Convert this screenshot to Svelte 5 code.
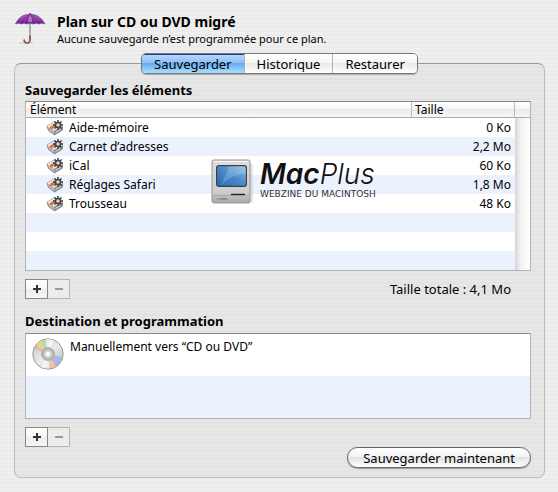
<script>
  const tabs = ["Sauvegarder", "Historique", "Restaurer"];
  const items = [
    { name: "Aide-mémoire", size: "0 Ko" },
    { name: "Carnet d’adresses", size: "2,2 Mo" },
    { name: "iCal", size: "60 Ko" },
    { name: "Réglages Safari", size: "1,8 Mo" },
    { name: "Trousseau", size: "48 Ko" },
  ];
  // empty striped rows under the last item
  const blanks = [1, 2, 3];
  const teeth = [0, 45, 90, 135, 180, 225, 270, 315];

  let active = $state("Sauvegarder");
</script>

{#snippet addRemove(what)}
  <div class="add-remove">
    <button type="button" aria-label="Ajouter {what}">
      <svg width="10" height="10" viewBox="0 0 10 10"><path d="M1 5h8M5 1v8" stroke="#333" stroke-width="2" /></svg>
    </button>
    <button type="button" aria-label="Supprimer {what}" disabled>
      <svg width="10" height="10" viewBox="0 0 10 10"><path d="M1 5h8" stroke="#999" stroke-width="2" /></svg>
    </button>
  </div>
{/snippet}

<main>
  <header>
    <svg class="umbrella" width="32" height="34" viewBox="0 0 32 34">
      <defs>
        <linearGradient id="canopy" x1="0" y1="0" x2="0" y2="1">
          <stop offset="0" stop-color="#b668c8" />
          <stop offset="1" stop-color="#6b1f88" />
        </linearGradient>
      </defs>
      <ellipse cx="12" cy="31" rx="8" ry="1.5" fill="#d8d8d8" />
      <path d="M16 11v17.500" stroke="#9a9a9a" stroke-width="1.500" />
      <path d="M16 24v4.500q-.3 2.500-3 2.500q-2.800-.2-2.800-2.800" fill="none" stroke="#86584e" stroke-width="1.700" stroke-linecap="round" />
      <path d="M16 1v2" stroke="#555" stroke-width="1.500" />
      <path d="M1.500 12C4.500 5.500 9 2.300 16 2.300S27.500 5.500 31 12q-3-1.500-6 0q-2.500-1.500-5.200 0q-3.500-1.500-7.200 0q-2.500-1.500-5.300 0q-3-1.500-5.800 0z" fill="url(#canopy)" stroke="#6a2488" stroke-width=".5" />
      <path d="M7.500 11.600Q10 5 15.500 2.600Q12.700 6 12.600 11.600M25 11.600Q22.500 5 16.500 2.600Q19.600 6 19.800 11.600" fill="none" stroke="#5c1b76" stroke-width=".7" />
      <path d="M14.200 10Q14.400 5.500 16 3Q17.900 5.500 18.200 10z" fill="#c987d5" opacity=".7" />
    </svg>
    <div>
      <h1>Plan sur CD ou DVD migré</h1>
      <p>Aucune sauvegarde n’est programmée pour ce plan.</p>
    </div>
  </header>

  <nav class="tabs">
    {#each tabs as tab}
      <button type="button" class:active={active === tab} onclick={() => (active = tab)}>{tab}</button>
    {/each}
  </nav>

  <section class="panel">
    <h2>Sauvegarder les éléments</h2>
    <div class="list">
      <table>
        <thead>
          <tr>
            <th>Élément</th>
            <th class="size">Taille</th>
            <th class="track"></th>
          </tr>
        </thead>
        <tbody>
          {#each items as item}
            <tr>
              <td>
                <div class="item">
                  <svg width="18" height="16" viewBox="0 0 18 16">
                    <path d="M1 6L9 1.500L16.500 6.500V10L8.500 15L2.500 10.500z" fill="#b8b8bc" stroke="#77777c" stroke-width=".8" />
                    <path d="M1 6L9 1.500L16.500 6.500L8 11z" fill="#e6e6e9" />
                    <path d="M8 11L16.500 6.500V10L8.500 15z" fill="#8c8c92" />
                    <path d="M3.500 8.500Q4 5.500 8 5L7.700 3.800L10 6L8 8Q6 7.500 6.700 10z" fill="#f0701c" />
                    <path d="M9.500 12.500l5-3" stroke="#e4e4e8" stroke-width="1" />
                    <g fill="#454545" transform="translate(12 5)">
                      {#each teeth as angle}
                        <rect x="-.8" y="-5" width="1.600" height="3" transform="rotate({angle})" />
                      {/each}
                    </g>
                    <circle cx="12" cy="5" r="2.500" fill="#d9d9d9" stroke="#454545" stroke-width="1.500" />
                  </svg>
                  {item.name}
                </div>
              </td>
              <td class="size">{item.size}</td>
              <td class="track"></td>
            </tr>
          {/each}
          {#each blanks as blank}
            <tr>
              <td></td>
              <td></td>
              <td class="track"></td>
            </tr>
          {/each}
        </tbody>
      </table>

      <div class="watermark">
        <svg width="44" height="47" viewBox="0 0 44 47">
          <defs>
            <linearGradient id="shell" x1="0" y1="0" x2="0" y2="1">
              <stop offset="0" stop-color="#dedee0" />
              <stop offset=".75" stop-color="#cdcdd0" />
              <stop offset="1" stop-color="#a8a8ac" />
            </linearGradient>
            <linearGradient id="screen" x1="0" y1="1" x2="1" y2="0">
              <stop offset="0" stop-color="#2a6ab0" />
              <stop offset=".5" stop-color="#4689c9" />
              <stop offset="1" stop-color="#8bbce5" />
            </linearGradient>
          </defs>
          <path d="M38 4l4 2v37l-5 2z" fill="#b5b5b8" opacity=".35" />
          <rect x="1" y="1" width="38" height="43" rx="2" fill="url(#shell)" stroke="#96969a" />
          <path d="M2 2.500h36" stroke="#f8f8f8" />
          <rect x="5" y="6" width="31" height="22" rx="3" fill="#3c4048" />
          <rect x="6.200" y="7.200" width="28.600" height="19.600" rx="2" fill="url(#screen)" />
          <path d="M18 7.200h14.800q2 0 2 2V15Q20 15 10 26.800Q14 17 18 7.200z" fill="#fff" opacity=".18" />
          <path d="M20 35.500h14" stroke="#252525" stroke-width="1.500" />
          <path d="M2 36.500h36" stroke="#97979a" stroke-width=".6" />
          <circle cx="6.500" cy="40" r="1" fill="#9aa82c" />
          <path d="M8.500 40h8" stroke="#77777c" stroke-width="1.200" />
        </svg>
        <div>
          <div class="brand"><b>Mac</b>Plus</div>
          <div class="tagline">WEBZINE DU MACINTOSH</div>
        </div>
      </div>
    </div>

    <div class="list-footer">
      {@render addRemove("un élément")}
      <span class="total">Taille totale : 4,1 Mo</span>
    </div>

    <h2>Destination et programmation</h2>
    <ul class="list destinations">
      <li>
        <svg width="32" height="32" viewBox="0 0 32 32">
          <defs>
            <linearGradient id="disc" x1="0" y1="0" x2="1" y2="1">
              <stop offset="0" stop-color="#c2c2c2" />
              <stop offset=".5" stop-color="#ececec" />
              <stop offset="1" stop-color="#b4b4b4" />
            </linearGradient>
          </defs>
          <circle cx="16" cy="16" r="15.200" fill="url(#disc)" stroke="#969696" />
          <path d="M16 16L4 7Q6 4 9 2.800z" fill="#f2cf7c" opacity=".8" />
          <path d="M16 16L9 2.800Q11 1.800 13 1.500z" fill="#9cdca4" opacity=".8" />
          <path d="M16 16L2 11Q2.500 9 4 7z" fill="#eaa9a0" opacity=".6" />
          <path d="M16 16L30.500 19Q30 21.500 28.500 24z" fill="#91b9ee" opacity=".8" />
          <path d="M16 16L28.500 24Q26.500 27 24 28.500z" fill="#a9a2e6" opacity=".7" />
          <path d="M16 16L24 28.500Q21.500 30 19 30.500z" fill="#f0c08c" opacity=".8" />
          <path d="M16 16L14 1.200Q19 .8 22 2.400zM16 16L17 30.800Q12 31 9 29z" fill="#fff" opacity=".6" />
          <circle cx="16" cy="16" r="6.500" fill="#b9b9b9" stroke="#999" stroke-width=".7" />
          <circle cx="16" cy="16" r="4.300" fill="#d8d8d8" stroke="#aaa" stroke-width=".6" />
          <circle cx="16" cy="16" r="2" fill="#fff" />
        </svg>
        <span>Manuellement vers “CD ou DVD”</span>
      </li>
      <li></li>
    </ul>
    {@render addRemove("une destination")}

    <div class="actions">
      <button type="button" class="save">Sauvegarder maintenant</button>
    </div>
  </section>
</main>

<style>
  :global(body) {
    margin: 0;
    min-height: 100vh;
    background: repeating-linear-gradient(#efefef 0 2px, #ebebeb 2px 4px);
  }

  main {
    padding: 12px 13px 13px 14px;
    font-family: "Lucida Grande", "Noto Sans", sans-serif;
    font-size: 12px;
    color: #000;
  }

  header {
    display: flex;
    gap: 11px;
    height: 41px;
  }

  h1,
  h2,
  p {
    margin: 0;
  }

  h1 {
    font-size: 14px;
    line-height: 19px;
  }

  p {
    font-size: 11px;
    line-height: 15px;
  }

  h2 {
    font-size: 13px;
    line-height: 20px;
  }

  button {
    font-family: inherit;
    color: inherit;
    padding: 0;
  }

  .tabs {
    position: relative;
    display: flex;
    width: max-content;
    margin: 0 auto -11px;
    border: 1px solid #777;
    border-radius: 5px;
    overflow: hidden;
    box-shadow: 0 1px 1px #aaa;
  }

  .tabs button {
    height: 19px;
    padding: 0 12px;
    border: none;
    border-left: 1px solid #b4b4b4;
    background: linear-gradient(#fff, #f5f5f5 49%, #e9e9e9 50%, #fff);
    font-size: 13px;
    line-height: 18px;
  }

  .tabs button:first-child {
    border-left: none;
  }

  .tabs button.active {
    background: linear-gradient(#b9d9f8, #8fc0f4 45%, #68aaf0 50%, #a9e0ff);
    box-shadow: inset 0 1px #26389c;
  }

  .panel {
    padding: 16px 13px 9px 10px;
    border: 1px solid #bcbcbc;
    border-top-color: #999;
    border-radius: 7px;
    background: repeating-linear-gradient(#e7e7e7 0 2px, #e3e3e3 2px 4px);
  }

  .list {
    position: relative;
    margin-top: 1px;
    border: 1px solid #b3b3b3;
    border-top-color: #888;
    background: #fff;
  }

  table {
    width: 100%;
    table-layout: fixed;
    border-collapse: separate;
    border-spacing: 0;
  }

  th {
    height: 15px;
    padding: 0 4px;
    border-bottom: 1px solid #aaa;
    border-right: 1px solid #bbb;
    background: linear-gradient(#fff, #f5f5f5 49%, #ebebeb 50%, #f7f7f7);
    font-weight: normal;
    line-height: 15px;
    text-align: left;
  }

  th.size {
    width: 95px;
    padding: 0 4px 0 3px;
  }

  th.track {
    width: 15px;
    padding: 0;
    border-right: none;
  }

  td {
    height: 19px;
    padding: 0;
    line-height: 19px;
  }

  tbody tr:nth-child(even) {
    background: #ebf2fe;
  }

  td.size {
    padding-right: 4px;
    text-align: right;
  }

  td.track {
    background: linear-gradient(to right, #d5d5d5, #f4f4f4 40%, #fff);
  }

  .item {
    display: flex;
    align-items: center;
    gap: 5px;
    padding-left: 20px;
  }

  .watermark {
    position: absolute;
    top: 57px;
    left: 185px;
    display: flex;
    gap: 5px;
  }

  .brand {
    font-family: Inter, "Liberation Sans", sans-serif;
    font-size: 28px;
    font-style: italic;
    font-weight: 300;
    line-height: 30px;
    color: #111;
  }

  .brand b {
    font-weight: 600;
  }

  .tagline {
    font-family: "DejaVu Sans", sans-serif;
    font-size: 9px;
    line-height: 11px;
    color: #333;
  }

  .list-footer {
    display: flex;
    justify-content: space-between;
    margin-bottom: 12px;
  }

  .total {
    padding: 8px 20px 0 0;
    font-size: 13px;
    line-height: 20px;
  }

  .add-remove {
    display: flex;
    margin-top: 8px;
  }

  .add-remove button {
    display: grid;
    place-items: center;
    width: 23px;
    height: 20px;
    border: 1px solid #888;
    background: linear-gradient(#fff, #f8f8f8 49%, #ededed 50%, #f6f6f6);
  }

  .add-remove button:disabled {
    width: 22px;
    border-color: #b5b5b5;
    border-left: none;
    background: #ececec;
  }

  .destinations {
    margin: 2px 0 0;
    padding: 0;
    list-style: none;
  }

  .destinations li {
    display: flex;
    gap: 6px;
    height: 38px;
    padding: 4px 6px 0;
  }

  .destinations li:nth-child(even) {
    background: #ebf2fe;
  }

  .destinations span {
    line-height: 18px;
  }

  .actions {
    display: flex;
    justify-content: flex-end;
  }

  .save {
    height: 21px;
    padding: 0 15px;
    border: 1px solid #666;
    border-radius: 11px;
    background: linear-gradient(#fff, #f3f3f3 48%, #e2e2e2 50%, #fff);
    box-shadow: 0 1px 1px #999;
    font-size: 13px;
    line-height: 18px;
  }
</style>
